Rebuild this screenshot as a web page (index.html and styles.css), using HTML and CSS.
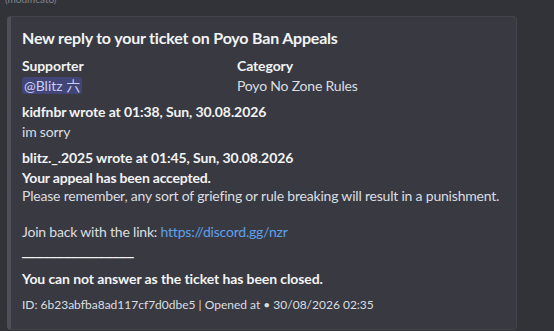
FILE: index.html
```html
<!DOCTYPE html>
<html>
<head>
<meta charset="utf-8">
<link rel="stylesheet" href="styles.css">
</head>
<body>
<div class="edited">(modificato)</div>
<div class="embed">
  <div class="title">New reply to your ticket on Poyo Ban Appeals</div>
  <div class="fields">
    <div class="field">
      <div class="fname">Supporter</div>
      <div class="fvalue"><span class="mention">@Blitz 六</span></div>
    </div>
    <div class="field">
      <div class="fname">Category</div>
      <div class="fvalue">Poyo No Zone Rules</div>
    </div>
    <div class="field wide">
      <div class="fname">kidfnbr wrote at 01:38, Sun, 30.08.2026</div>
      <div class="fvalue">im sorry</div>
    </div>
    <div class="field wide">
      <div class="fname">blitz._.2025 wrote at 01:45, Sun, 30.08.2026</div>
      <div class="fvalue"><strong>Your appeal has been accepted.</strong><br><span class="nowrap">Please remember, any sort of griefing or rule breaking will result in a punishment.</span><br><br>Join back with the link: <a class="link" href="#">https://discord.gg/nzr</a><br><span class="sep">________________</span></div>
    </div>
    <div class="field wide closed">
      <div class="fname">You can not answer as the ticket has been closed.</div>
    </div>
  </div>
  <div class="footer">ID: 6b23abfba8ad117cf7d0dbe5 | Opened at • 30/08/2026 02:35</div>
</div>
</body>
</html>
```
FILE: styles.css
```css
html, body {
  margin: 0;
  padding: 0;
  background: #323339;
}
body {
  font-family: "Lato", "Noto Sans CJK JP", sans-serif;
  color: #dbdee1;
  width: 554px;
  height: 331px;
  overflow: hidden;
}
.edited {
  font-size: 10px;
  line-height: 12px;
  color: #80848e;
  margin: -7px 0 0 5px;
  height: 11px;
}
.embed {
  box-sizing: border-box;
  margin: 12px 0 0 7px;
  width: 510px;
  background: #393a41;
  border: 1px solid #43444b;
  border-left: 4px solid #4e5058;
  border-radius: 4px;
  padding: 10px 12px 16px 11px;
}
.title {
  font-size: 16px;
  line-height: 22px;
  font-weight: 700;
  color: #f2f3f5;
  letter-spacing: -0.2px;
}
.fields {
  margin-top: 8px;
  display: grid;
  grid-template-columns: 215px 1fr;
  row-gap: 8px;
}
.wide {
  grid-column: 1 / 3;
}
.fname {
  font-size: 14px;
  line-height: 18px;
  font-weight: 700;
  color: #f2f3f5;
  margin-bottom: 2px;
  letter-spacing: -0.1px;
}
.fvalue {
  font-size: 14px;
  line-height: 18px;
  color: #dbdee1;
  letter-spacing: -0.2px;
}
.fvalue strong {
  color: #f2f3f5;
}
.nowrap {
  white-space: nowrap;
}
.mention {
  background: rgba(88, 101, 242, 0.3);
  color: #c9cdfb;
  border-radius: 3px;
  padding: 0 2px;
  letter-spacing: 0;
}
.link {
  color: #5ea0ec;
  text-decoration: none;
}
.sep {
  font-family: "Noto Sans", sans-serif;
  font-size: 17px;
  line-height: 18px;
  color: #f2f3f5;
  font-weight: 700;
  letter-spacing: 0;
  position: relative;
  top: -1px;
}
.closed {
  margin-top: 2px;
}
.footer {
  margin-top: 7px;
  font-size: 12px;
  line-height: 16px;
  color: #dbdee1;
}
```
